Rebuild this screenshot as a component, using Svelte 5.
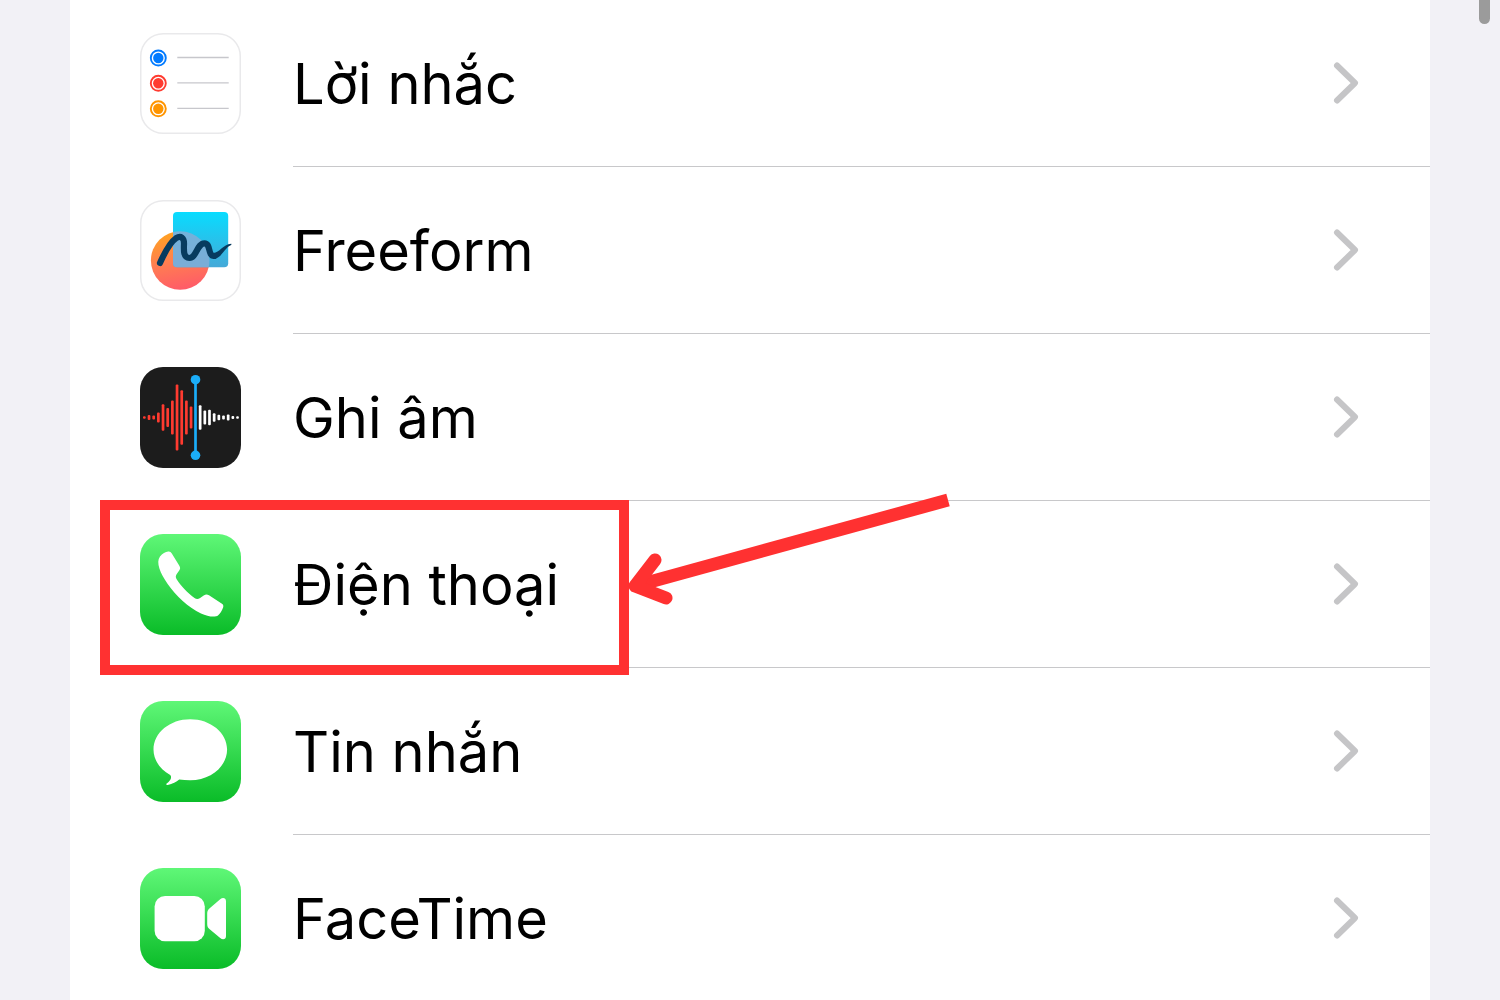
<script lang="ts">
	interface App {
		id: string;
		name: string;
		highlighted?: boolean;
	}

	const apps: App[] = [
		{ id: 'reminders', name: 'Lời nhắc' },
		{ id: 'freeform', name: 'Freeform' },
		{ id: 'memos', name: 'Ghi âm' },
		{ id: 'phone', name: 'Điện thoại', highlighted: true },
		{ id: 'messages', name: 'Tin nhắn' },
		{ id: 'facetime', name: 'FaceTime' }
	];

	const reminders = [
		{ y: 25, color: '#007aff' },
		{ y: 50.3, color: '#ff3b30' },
		{ y: 75.8, color: '#ff9500' }
	];

	// half heights of the waveform bars, left to right
	const played = [1.2, 2.6, 2, 5, 13.3, 9.6, 16.9, 33, 27.3, 17, 11];
	const remaining = [12.3, 6.9, 7.7, 4.2, 2.8, 1.9, 3.1, 1.5, 1.3];
</script>

<main>
	<ul>
		{#each apps as app (app.id)}
			<li>
				<a href="#{app.id}">
					<svg class="icon" viewBox="0 0 101 101" aria-hidden="true">
						{#if app.id === 'reminders'}
							<rect class="tile" x="0.75" y="0.75" width="99.5" height="99.5" rx="22.5" />
							{#each reminders as item}
								<circle cx="18.3" cy={item.y} r="7.5" fill="none" stroke={item.color} stroke-width="1.9" />
								<circle cx="18.3" cy={item.y} r="5.2" fill={item.color} />
								<path d="M37.3 {item.y - 0.5}H88.7" stroke="#c7c7cc" stroke-width="1.3" />
							{/each}
						{:else if app.id === 'freeform'}
							<defs>
								<linearGradient id="sun" x1="0.3" y1="0" x2="0.5" y2="1">
									<stop offset="0" stop-color="#ffa31f" />
									<stop offset="0.5" stop-color="#ff7f50" />
									<stop offset="1" stop-color="#ff5b68" />
								</linearGradient>
								<linearGradient id="sky" x1="0" y1="0" x2="0" y2="1">
									<stop offset="0" stop-color="#08dcff" />
									<stop offset="1" stop-color="#45a9d8" />
								</linearGradient>
								<clipPath id="square">
									<rect x="33" y="12" width="55.2" height="55.2" rx="4" />
								</clipPath>
							</defs>
							<rect class="tile" x="0.75" y="0.75" width="99.5" height="99.5" rx="22.5" />
							<circle cx="40.2" cy="60.5" r="29.3" fill="url(#sun)" />
							<rect x="33" y="12" width="55.2" height="55.2" rx="4" fill="url(#sky)" />
							<circle cx="40.2" cy="60.5" r="29.3" fill="#84add6" fill-opacity="0.85" clip-path="url(#square)" />
							<path
								class="squiggle"
								d="M20 63C24 54 30.5 42 36 38.2C41 35.2 44.2 38 44 44C43.7 51 43.5 58 49.4 58C56.5 58 57 43.3 64.5 43.3C71 43.3 67.5 56 74 56"
							/>
							<path
								d="M73 53C79.5 53.4 82.5 44.3 91.3 43.8C91.8 44.3 91.2 45 90.2 45.6C84.500 48.2 81 59.2 73 59.1Z"
								fill="#073b5f"
							/>
						{:else if app.id === 'memos'}
							<rect width="101" height="101" rx="23" fill="#1c1c1c" />
							{#each played as half, i}
								<rect x={3 + i * 4.67} y={50.5 - half} width="2.7" height={half * 2} rx="1" fill="#ff3b30" />
							{/each}
							{#each remaining as half, i}
								<rect x={58.8 + i * 4.67} y={50.5 - half} width="2.7" height={half * 2} rx="1" fill="#fff" />
							{/each}
							<path d="M55.5 12.7V88.3" stroke="#1badf8" stroke-width="2.7" />
							<circle cx="55.5" cy="12.7" r="4.8" fill="#1badf8" />
							<circle cx="55.5" cy="88.3" r="4.8" fill="#1badf8" />
						{:else}
							<defs>
								<linearGradient id="green-{app.id}" x1="0" y1="0" x2="0" y2="1">
									<stop offset="0" stop-color="#5ff777" />
									<stop offset="1" stop-color="#0abc28" />
								</linearGradient>
							</defs>
							<rect width="101" height="101" rx="23" fill="url(#green-{app.id})" />
							{#if app.id === 'phone'}
								<path
									d="M20 22.5C22.3 19.5 25.5 18 28.2 17.5C29.8 17.2 30.9 18 31.8 19.4L39.2 31.5C40.5 33.6 40.4 34.8 39.2 36.4L36.6 40.2C35.5 41.8 35.6 43.4 36.5 45C40.5 51.5 47.5 58.900 54.5 64C56.300 65.300 58 65.400 59.700 64.300L63.700 61.500C65.600 60.200 67 60 69 61.300L81.600 69.400C83.300 70.500 83.700 71.600 83.100 73.400C82 76.500 80.200 79.500 78.200 81.200C75 83.800 68 82.600 61 79.400C48.500 73.500 36 62 27.500 49.700C20.500 39.500 15.500 28.500 20 22.500Z"
									fill="#fff"
								/>
							{:else if app.id === 'messages'}
								<path
									d="M50.2 18.2C29.900 18.2 13.500 31.7 13.500 48.6C13.500 59 19.900 68.3 30.200 74C32.400 76.3 30.200 80 26.400 82.8C25.900 83.5 26.500 84.1 27.700 83.9C32.500 83.3 36.400 80.7 39.200 78.5C42.700 79 46.400 79.3 50.200 79.3C70.600 79.3 87.100 65.500 87.100 48.6C87.100 31.7 70.600 18.2 50.200 18.2Z"
									fill="#fff"
								/>
							{:else}
								<rect x="14.6" y="28" width="50.2" height="45.3" rx="10.5" fill="#fff" />
								<path
									d="M67.2 45.5C67.2 43.2 67.9 41.800 69.4 40.4L80.2 31.2C82.9 29 86 30 86 33.2V68C86 71.3 82.9 72.3 80.2 70L69.4 61C67.9 59.7 67.2 58.1 67.2 55.9Z"
									fill="#fff"
								/>
							{/if}
						{/if}
					</svg>
					<span class="label">
						<span class="name">{app.name}</span>
						<svg class="chevron" viewBox="0 0 28 44" aria-hidden="true">
							<path d="M5 4.5L23 22L5 39.5" />
						</svg>
					</span>
				</a>
				{#if app.highlighted}
					<div class="highlight"></div>
					<svg class="arrow" viewBox="0 0 324 114" aria-hidden="true">
						<path d="M320 7L7 93" />
						<path class="head" d="M27 67L7 93L38 105" />
					</svg>
				{/if}
			</li>
		{/each}
	</ul>
	<div class="scroll-thumb"></div>
</main>

<style>
	:global(body) {
		margin: 0;
		background: #f2f1f6;
	}

	main {
		position: relative;
		height: 100vh;
		padding: 0 70px;
		overflow: hidden;
		font-family: Inter, 'Noto Sans', sans-serif;
	}

	ul {
		min-height: 100%;
		margin: 0;
		padding: 0;
		list-style: none;
		background: white;
	}

	li {
		position: relative;
	}

	a {
		display: flex;
		align-items: center;
		gap: 52px;
		height: 167px;
		padding-left: 70px;
		color: black;
		text-decoration: none;
	}

	.icon {
		flex: none;
		width: 101px;
		height: 101px;
	}

	.tile {
		fill: white;
		stroke: #e9e9eb;
		stroke-width: 1.5;
	}

	.squiggle {
		fill: none;
		stroke: #073b5f;
		stroke-width: 6.2;
		stroke-linecap: round;
		stroke-linejoin: round;
	}

	.label {
		display: flex;
		flex: 1;
		align-items: center;
		justify-content: space-between;
		box-sizing: border-box;
		height: 100%;
		padding-right: 70px;
		border-bottom: 1px solid #c8c8ca;
	}

	.name {
		padding-top: 2px;
		font-size: 56px;
		line-height: 72px;
	}

	.chevron {
		width: 28px;
		height: 44px;
		fill: none;
		stroke: #c5c5c7;
		stroke-width: 6;
		stroke-linecap: round;
		stroke-linejoin: round;
	}

	.highlight {
		position: absolute;
		top: -1px;
		left: 30px;
		box-sizing: border-box;
		width: 529px;
		height: 175px;
		border: 10px solid #ff3131;
		pointer-events: none;
	}

	.arrow {
		position: absolute;
		top: -8px;
		left: 558px;
		width: 324px;
		height: 114px;
		fill: none;
		stroke: #ff3131;
		stroke-width: 13;
		pointer-events: none;
	}

	.head {
		stroke-linecap: round;
		stroke-linejoin: round;
	}

	.scroll-thumb {
		position: absolute;
		top: 0;
		right: 10px;
		width: 11px;
		height: 24px;
		border-radius: 0 0 6px 6px;
		background: #9b9b9b;
	}
</style>
